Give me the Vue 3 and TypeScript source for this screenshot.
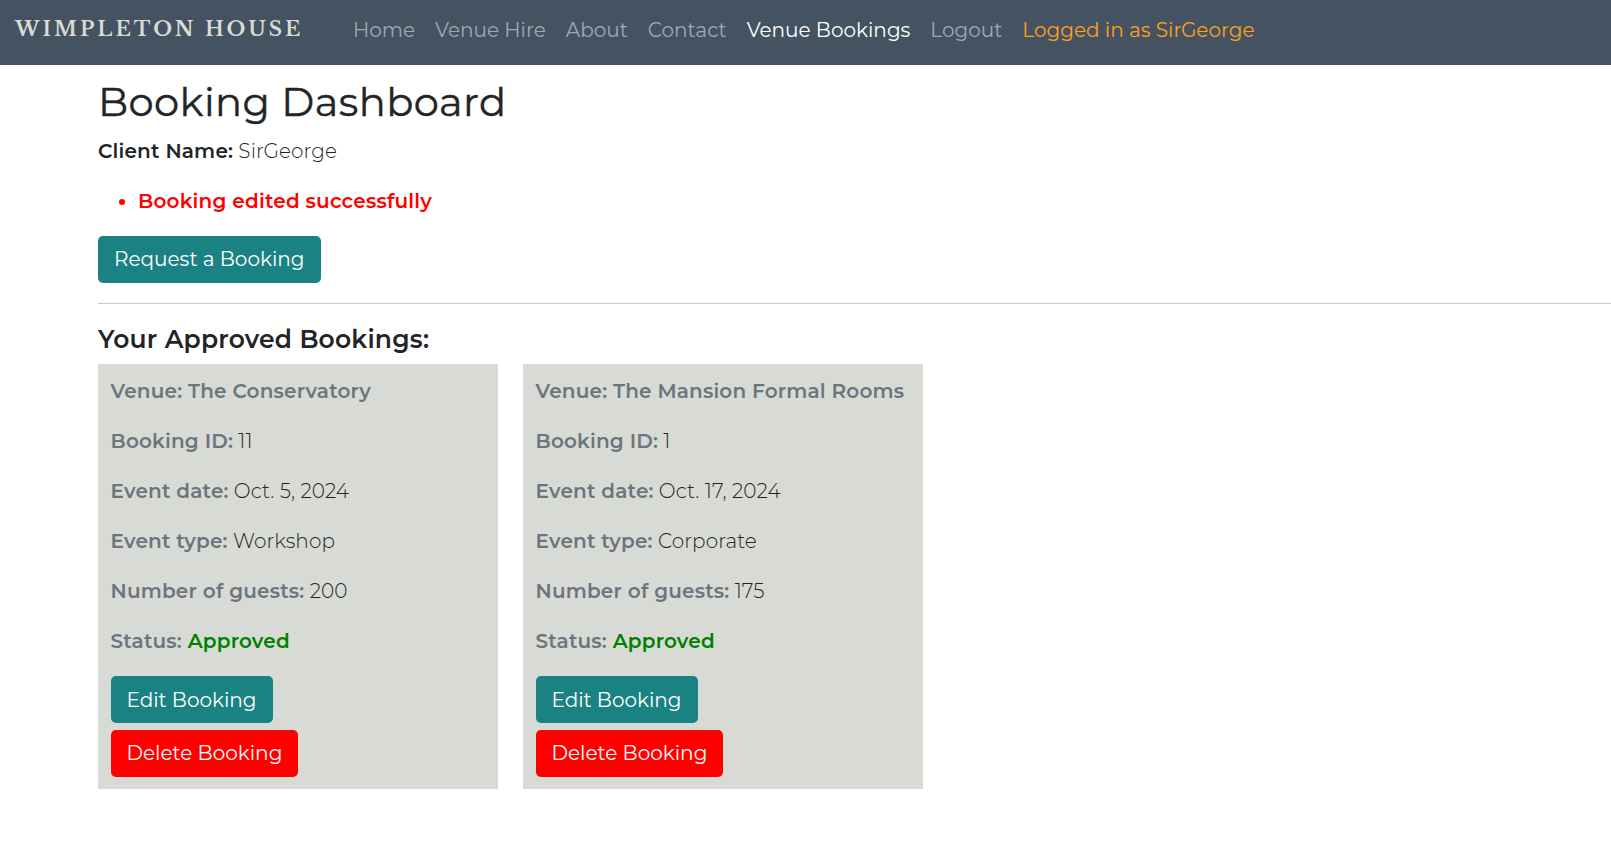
<script setup lang="ts">
interface NavLink {
  label: string
  state?: 'active' | 'user'
}

interface Booking {
  venue: string
  id: number
  date: string
  type: string
  guests: number
  status: string
}

const links: NavLink[] = [
  { label: 'Home' },
  { label: 'Venue Hire' },
  { label: 'About' },
  { label: 'Contact' },
  { label: 'Venue Bookings', state: 'active' },
  { label: 'Logout' },
  { label: 'Logged in as SirGeorge', state: 'user' },
]

const client = 'SirGeorge'

const bookings: Booking[] = [
  { venue: 'The Conservatory', id: 11, date: 'Oct. 5, 2024', type: 'Workshop', guests: 200, status: 'Approved' },
  { venue: 'The Mansion Formal Rooms', id: 1, date: 'Oct. 17, 2024', type: 'Corporate', guests: 175, status: 'Approved' },
]
</script>

<template>
  <div class="page">
    <header class="navbar">
      <a class="brand">WIMPLETON HOUSE</a>
      <nav class="links">
        <a v-for="link in links" :key="link.label" class="link" :class="link.state">{{ link.label }}</a>
      </nav>
    </header>

    <main class="content">
      <h1 class="title">Booking Dashboard</h1>
      <p class="client"><strong>Client Name:</strong> {{ client }}</p>
      <ul class="messages">
        <li>Booking edited successfully</li>
      </ul>
      <button class="btn teal" type="button">Request a Booking</button>
      <hr class="rule" />
      <h2 class="subtitle">Your Approved Bookings:</h2>
      <section class="cards">
        <article v-for="b in bookings" :key="b.id" class="card">
          <p><strong>Venue: {{ b.venue }}</strong></p>
          <p><strong>Booking ID:</strong> {{ b.id }}</p>
          <p><strong>Event date:</strong> {{ b.date }}</p>
          <p><strong>Event type:</strong> {{ b.type }}</p>
          <p><strong>Number of guests:</strong> {{ b.guests }}</p>
          <p><strong>Status: <span class="approved">{{ b.status }}</span></strong></p>
          <div class="actions">
            <button class="btn teal" type="button">Edit Booking</button>
            <button class="btn red" type="button">Delete Booking</button>
          </div>
        </article>
      </section>
    </main>
  </div>
</template>

<style>
body {
  background: #fff;
}
</style>

<style scoped>
.page {
  height: 843px;
  overflow: hidden;
  color: #222426;
  font: 300 20px/30px Montserrat, Inter, "Open Sans", sans-serif;
}

.navbar {
  display: flex;
  align-items: flex-start;
  height: 65px;
  background: #445261;
}

.brand {
  flex: none;
  width: 353px;
  padding: 14px 0 0 15px;
  box-sizing: border-box;
  color: #d8dbd5;
  font: 700 20px/30px "Libre Baskerville", "Liberation Serif", serif;
  letter-spacing: 3px;
  white-space: nowrap;
}

.links {
  display: flex;
  gap: 20px;
  padding-top: 15px;
}

.link {
  color: #a2a8b0;
  font-weight: 400;
  white-space: nowrap;
}

.link.active {
  color: #fff;
}

.link.user {
  color: #ffa01e;
}

.content {
  padding: 13px 0 0 98px;
}

.title {
  margin: 0 0 10px;
  font-size: 40px;
  font-weight: 400;
  line-height: 48px;
  letter-spacing: 0.42px;
  -webkit-text-stroke: 0.4px currentColor;
}

p {
  margin: 0 0 20px;
  letter-spacing: 0.12px;
  white-space: nowrap;
}

strong {
  font-weight: 600;
  letter-spacing: 0.19px;
}

.messages {
  margin: 0 0 20px;
  padding-left: 40px;
  color: red;
  font-weight: 600;
  letter-spacing: 0.21px;
}

.btn {
  display: block;
  height: 47px;
  padding: 0 16px 1px;
  border: 0;
  border-radius: 5px;
  color: #fff;
  font: 400 20px/46px Montserrat, Inter, "Open Sans", sans-serif;
}

.teal {
  background: #1a8282;
}

.red {
  background: red;
}

.rule {
  height: 1px;
  margin: 20px 0;
  border: 0;
  background: #c8c9ca;
}

.subtitle {
  margin: 0 0 10px;
  font-size: 25px;
  font-weight: 600;
  line-height: 30px;
  letter-spacing: 0.22px;
}

.cards {
  display: flex;
  gap: 25px;
}

.card {
  width: 400px;
  height: 425px;
  padding: 12px 12.5px;
  box-sizing: border-box;
  background: #d8dbd5;
}

.card strong {
  color: #6c757d;
}

.card .approved {
  color: green;
}

.actions {
  display: flex;
  flex-direction: column;
  align-items: flex-start;
  gap: 7px;
}

.actions .teal {
  padding-top: 1px;
  padding-bottom: 0;
}
</style>
